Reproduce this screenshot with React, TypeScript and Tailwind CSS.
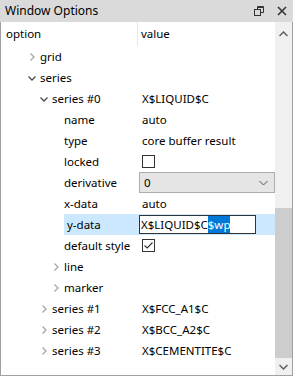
import React from 'react';

type Row = {
  label: string;
  depth: number;
  arrow?: 'open' | 'closed';
  value?: React.ReactNode;
  selected?: boolean;
};

function Chevron({ open }: { open: boolean }) {
  return (
    <svg width="10" height="10" viewBox="0 0 10 10" className="shrink-0">
      {open ? (
        <path d="M1.5 3.5 L5 7 L8.5 3.5" fill="none" stroke="#4a4a4a" strokeWidth="1.3" />
      ) : (
        <path d="M3.5 1.5 L7 5 L3.5 8.5" fill="none" stroke="#a6a6a6" strokeWidth="1.3" />
      )}
    </svg>
  );
}

function Checkbox({ checked }: { checked?: boolean }) {
  return (
    <div className="w-[13px] h-[13px] border border-[#333] bg-white flex items-center justify-center">
      {checked && (
        <svg width="11" height="11" viewBox="0 0 11 11">
          <path d="M1.5 5.5 L4.2 8 L9.5 2.5" fill="none" stroke="#333" strokeWidth="1.1" />
        </svg>
      )}
    </div>
  );
}

export default function App() {
  const rows: Row[] = [
    { label: 'grid', depth: 0, arrow: 'closed' },
    { label: 'series', depth: 0, arrow: 'open' },
    { label: 'series #0', depth: 1, arrow: 'open', value: 'X$LIQUID$C' },
    { label: 'name', depth: 2, value: 'auto' },
    { label: 'type', depth: 2, value: 'core buffer result' },
    { label: 'locked', depth: 2, value: <Checkbox /> },
    {
      label: 'derivative',
      depth: 2,
      value: (
        <div className="-ml-[3px] w-[136px] h-[21px] bg-[#e5e5e5] border border-[#adadad] flex items-center justify-between pl-[4px] pr-[6px]">
          <span>0</span>
          <svg width="9" height="6" viewBox="0 0 9 6">
            <path d="M0.5 1 L4.5 5 L8.5 1" fill="none" stroke="#555" strokeWidth="1" />
          </svg>
        </div>
      ),
    },
    { label: 'x-data', depth: 2, value: 'auto' },
    {
      label: 'y-data',
      depth: 2,
      selected: true,
      value: (
        <div className="-ml-[3px] w-[117px] h-[19px] bg-white border border-[#333] flex items-center pl-[1px]">
          <span>X$LIQUID$C</span>
          <span className="bg-[#0078d7] text-white">$wp</span>
        </div>
      ),
    },
    { label: 'default style', depth: 2, value: <Checkbox checked /> },
    { label: 'line', depth: 2, arrow: 'closed' },
    { label: 'marker', depth: 2, arrow: 'closed' },
    { label: 'series #1', depth: 1, arrow: 'closed', value: 'X$FCC_A1$C' },
    { label: 'series #2', depth: 1, arrow: 'closed', value: 'X$BCC_A2$C' },
    { label: 'series #3', depth: 1, arrow: 'closed', value: 'X$CEMENTITE$C' },
  ];

  return (
    <div
      className="w-[293px] h-[376px] bg-white flex flex-col text-[11.5px] text-black overflow-hidden"
      style={{ fontFamily: '"Noto Sans", "Liberation Sans", sans-serif' }}
    >
      {/* title bar */}
      <div className="h-[22px] bg-[#dadada] flex items-center justify-between pl-[5px] pr-[6px] shrink-0">
        <span className="text-[12px]">Window Options</span>
        <div className="flex items-center gap-[13px]">
          <svg width="10" height="10" viewBox="0 0 10 10">
            <rect x="0.5" y="3.5" width="6" height="6" fill="none" stroke="#333" />
            <path d="M3.5 3.5 V0.5 H9.5 V6.5 H6.5" fill="none" stroke="#333" />
            <path d="M3.5 1.5 H9.5" stroke="#333" />
          </svg>
          <svg width="10" height="10" viewBox="0 0 10 10">
            <path d="M1 1 L9 9 M9 1 L1 9" stroke="#333" strokeWidth="1.6" />
          </svg>
        </div>
      </div>

      {/* body */}
      <div className="flex-1 flex border-l border-r border-b border-[#a0a0a0] min-h-0">
        <div className="flex-1 flex flex-col min-w-0">
          {/* header */}
          <div className="h-[24px] flex items-center shrink-0">
            <div className="w-[137px] pl-[5px] border-r border-[#e5e5e5] h-full flex items-center">option</div>
            <div className="pl-[3px]">value</div>
          </div>
          {rows.map((r, i) => (
            <div key={i} className="h-[21px] flex items-center">
              <div className="w-[137px] flex items-center h-full" style={{ paddingLeft: 25 + r.depth * 12 }}>
                <div className="w-[12px] flex justify-center shrink-0">
                  {r.arrow && <Chevron open={r.arrow === 'open'} />}
                </div>
                <div
                  className={`flex items-center h-full flex-1 ml-[2px] ${r.selected ? 'bg-[#cce8ff] -ml-[1px] pl-[3px]' : ''}`}
                >
                  <span className="whitespace-nowrap">{r.label}</span>
                </div>
              </div>
              <div className={`flex-1 h-full flex items-center pl-[4px] whitespace-nowrap ${r.selected ? 'bg-[#cce8ff]' : ''}`}>
                {r.value}
              </div>
            </div>
          ))}
        </div>

        {/* scrollbar */}
        <div className="w-[17px] bg-[#f0f0f0] flex flex-col shrink-0">
          <div className="h-[23px] flex items-center justify-center">
            <svg width="9" height="6" viewBox="0 0 9 6">
              <path d="M0.5 5 L4.5 1 L8.5 5" fill="none" stroke="#606060" strokeWidth="1.5" />
            </svg>
          </div>
          <div className="flex-1 flex flex-col">
            <div className="h-[163px]" />
            <div className="flex-1 bg-[#cdcdcd]" />
          </div>
          <div className="h-[17px] flex items-center justify-center">
            <svg width="9" height="6" viewBox="0 0 9 6">
              <path d="M0.5 1 L4.5 5 L8.5 1" fill="none" stroke="#606060" strokeWidth="1.5" />
            </svg>
          </div>
        </div>
      </div>
    </div>
  );
}
